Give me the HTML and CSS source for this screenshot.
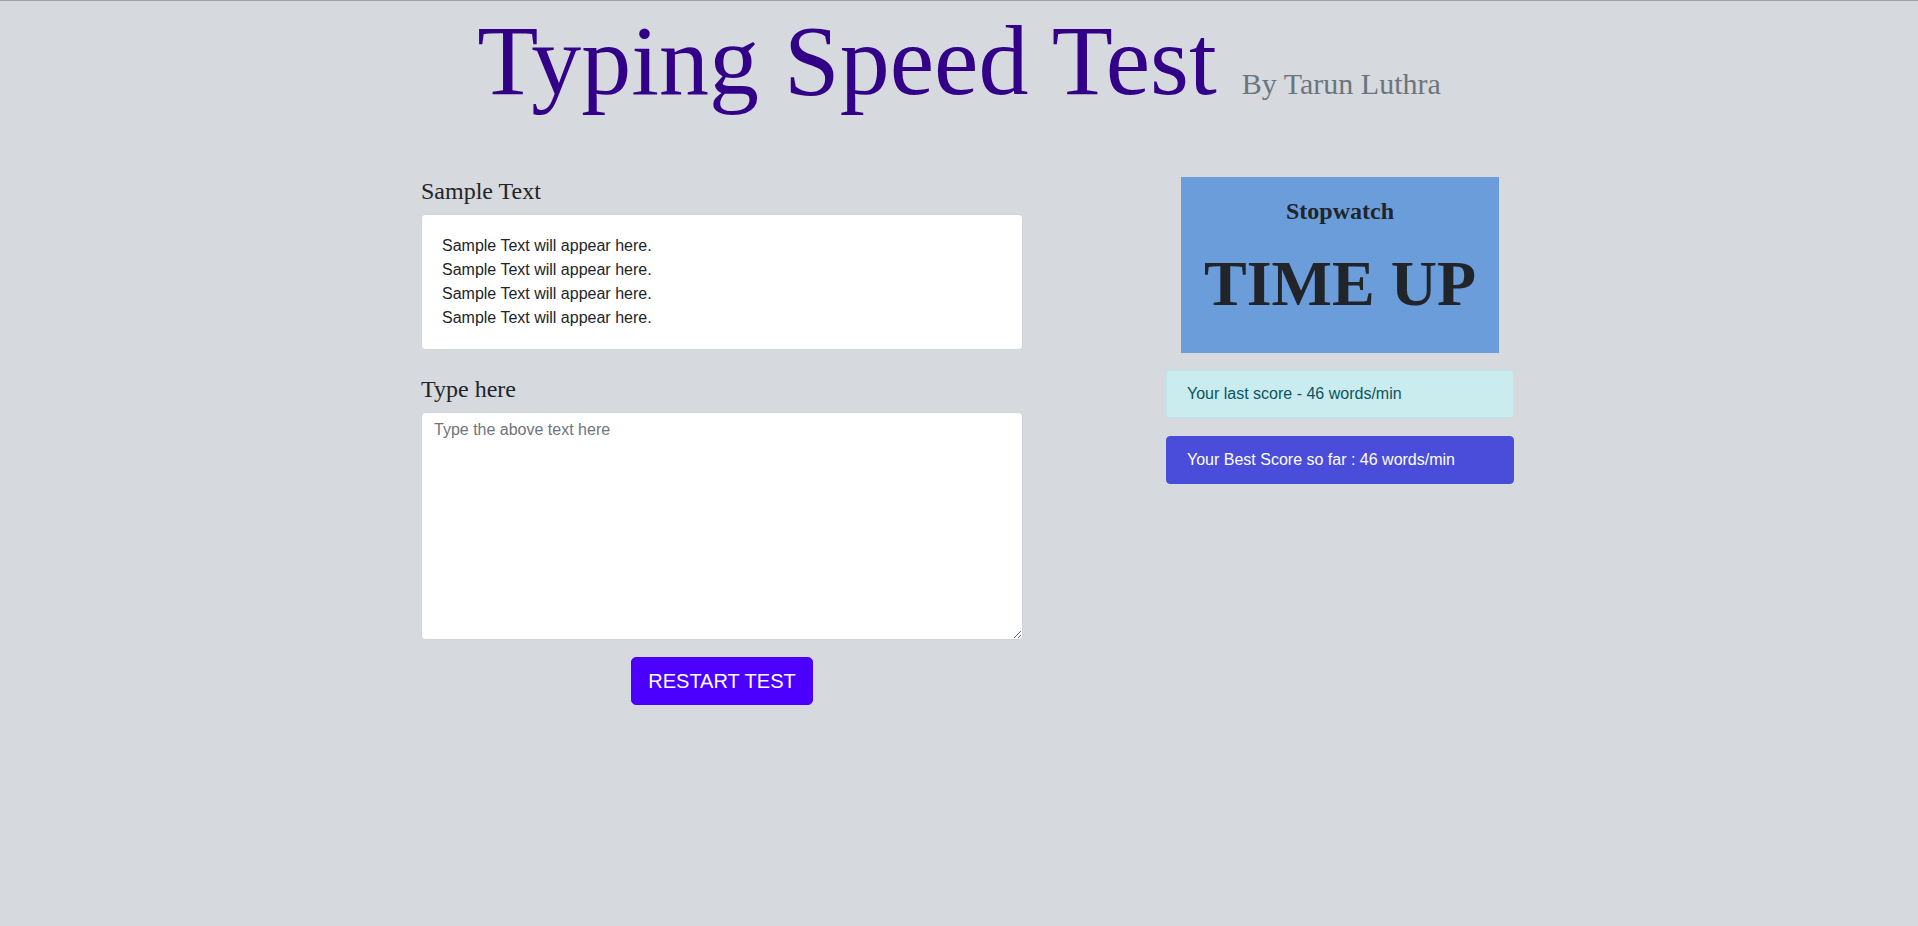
FILE: index.html
```html
<!DOCTYPE html>
<html lang="en">
<head>
<meta charset="utf-8">
<title>Typing Speed Test</title>
<link rel="stylesheet" href="styles.css">
</head>
<body>
<h1 class="title">Typing Speed Test <span class="byline">By Tarun Luthra</span></h1>
<main class="layout">
  <section class="left-col">
    <h4 class="label">Sample Text</h4>
    <div class="sample-box">
      <div>Sample Text will appear here.</div>
      <div>Sample Text will appear here.</div>
      <div>Sample Text will appear here.</div>
      <div>Sample Text will appear here.</div>
    </div>
    <h4 class="label">Type here</h4>
    <textarea class="type-area" placeholder="Type the above text here"></textarea>
    <div class="btn-row">
      <button class="restart-btn">RESTART TEST</button>
    </div>
  </section>
  <aside class="right-col">
    <div class="stopwatch">
      <div class="sw-title">Stopwatch</div>
      <div class="sw-time">TIME UP</div>
    </div>
    <div class="score score-last">Your last score - 46 words/min</div>
    <div class="score score-best">Your Best Score so far : 46 words/min</div>
  </aside>
</main>
</body>
</html>
```
FILE: styles.css
```css
html, body {
  margin: 0;
  padding: 0;
}
body {
  background: #d6d9de;
  border-top: 1px solid #a2a2a2;
  color: #212529;
  font-family: "Liberation Sans", Arial, sans-serif;
  min-height: 925px;
}
.title {
  margin: 0;
  text-align: center;
  font-family: "Liberation Serif", "Times New Roman", serif;
  font-weight: normal;
  font-size: 100px;
  line-height: 1.2;
  color: #330088;
}
.byline {
  font-size: 30px;
  color: #6c757d;
}
.layout {
  width: 1140px;
  box-sizing: border-box;
  margin: 56px auto 0;
  padding: 0 15px 0 32px;
  display: flex;
  justify-content: space-between;
  align-items: flex-start;
}
.left-col {
  width: 602px;
  display: flex;
  flex-direction: column;
}
.label {
  margin: 0 0 8.4px;
  font-family: "Liberation Serif", "Times New Roman", serif;
  font-weight: normal;
  font-size: 24px;
  line-height: 1.2;
  color: #212529;
}
.sample-box {
  background: #fff;
  border: 1px solid #d0d4d9;
  border-radius: 4px;
  padding: 19px 20px 19px;
  font-size: 16px;
  line-height: 24px;
  color: #212529;
  margin-bottom: 25px;
}
.type-area {
  display: block;
  box-sizing: border-box;
  width: 602px;
  height: 228px;
  margin: 0;
  padding: 5px 12px 6px;
  border: 1px solid #ced4da;
  border-radius: 4px;
  background: #fff;
  font-family: "Liberation Sans", Arial, sans-serif;
  font-size: 16px;
  line-height: 24px;
  color: #495057;
  resize: both;
}
.type-area::placeholder {
  color: #6c757d;
  opacity: 1;
}
.btn-row {
  display: flex;
  justify-content: center;
  margin-top: 17px;
}
.restart-btn {
  box-sizing: border-box;
  height: 48px;
  padding: 8px 16px;
  border: 1px solid #4b00ff;
  border-radius: 5px;
  background: #4b00ff;
  color: #fff;
  font-family: "Liberation Sans", Arial, sans-serif;
  font-size: 20px;
  line-height: 30px;
  cursor: pointer;
}
.right-col {
  width: 348px;
  display: flex;
  flex-direction: column;
}
.stopwatch {
  width: 318px;
  align-self: center;
  box-sizing: border-box;
  height: 176px;
  padding-top: 20px;
  background: #6c9ddb;
  text-align: center;
  font-family: "Liberation Serif", "Times New Roman", serif;
  font-weight: bold;
  color: #212529;
  margin-bottom: 17px;
}
.sw-title {
  font-size: 24px;
  line-height: 28.8px;
  margin-bottom: 20.4px;
}
.sw-time {
  font-size: 64px;
  line-height: 76.8px;
}
.score {
  box-sizing: border-box;
  height: 48px;
  padding: 11px 20px;
  border: 1px solid transparent;
  border-radius: 4px;
  font-size: 16px;
  line-height: 24px;
}
.score-last {
  background: #caecee;
  border-color: #bbe6ea;
  color: #0c5460;
  margin-bottom: 18px;
}
.score-best {
  background: #4a4dd9;
  border-color: #4a4dd9;
  color: #fff;
}
```
